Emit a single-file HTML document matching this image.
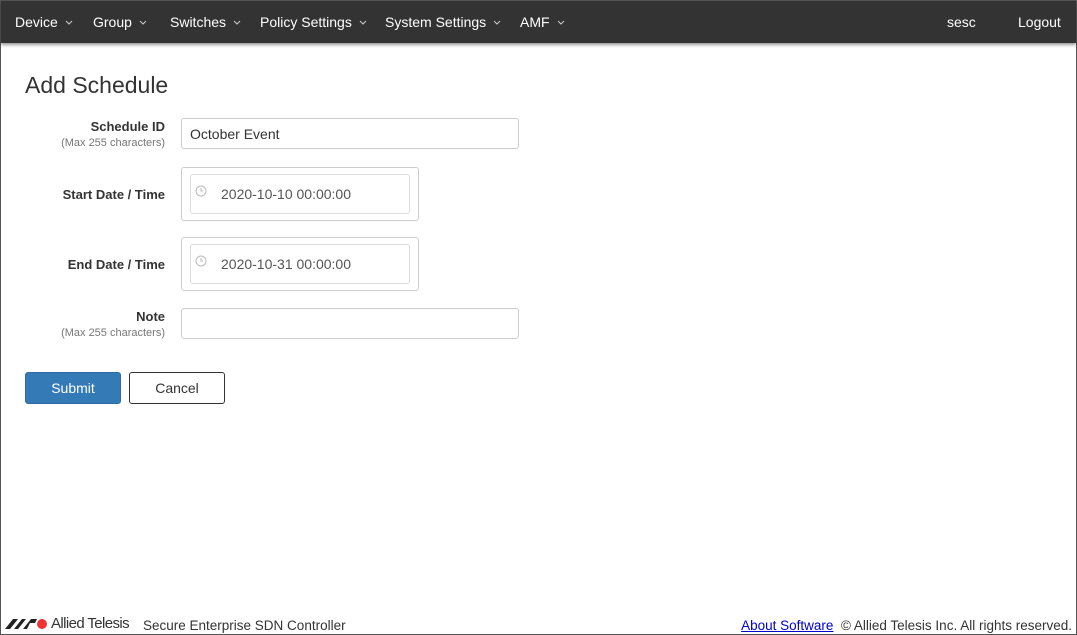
<!DOCTYPE html>
<html><head><style>
*{box-sizing:border-box}
body{margin:0;width:1077px;height:635px;overflow:hidden;font-family:"Liberation Sans",sans-serif;background:#fff;position:relative;border:1px solid #555}
.nav{position:absolute;left:0;top:0;width:1075px;height:42px;background:#333;box-shadow:0 2px 3px rgba(0,0,0,.4);color:#fff;font-size:14px}
.nav span{position:absolute;top:13px;white-space:nowrap}
.nav svg{margin-left:7px;vertical-align:2px}
h1{position:absolute;left:24px;top:71px;margin:0;font-weight:normal;font-size:23px;color:#333}
.lbl{position:absolute;right:911px;text-align:right;font-weight:bold;font-size:13px;color:#333;white-space:nowrap}
.lbl small{display:block;font-weight:normal;font-size:11px;color:#777;margin-top:3px}
.inp{position:absolute;left:180px;width:338px;height:31px;border:1px solid #ccc;border-radius:3px;font-size:14px;color:#333;padding:7px 8px}
.dt{position:absolute;left:180px;width:238px;height:54px;border:1px solid #ccc;border-radius:3px}
.dt div{position:absolute;left:8px;top:6px;width:220px;height:40px;border:1px solid #ddd;border-radius:3px;font-size:14px;color:#555;padding:11px 0 0 30px}
.dt svg{position:absolute;left:4px;top:10px}
.btn{position:absolute;top:371px;height:32px;border-radius:3px;font-size:14px;text-align:center;line-height:30px}
.foot{position:absolute;top:617px;font-size:13px;color:#333;white-space:nowrap}
</style></head><body>
<div class="nav">
<span style="left:14px">Device<svg width="8" height="5"><path d="M1 1l3 3 3-3" fill="none" stroke="#ccc"/></svg></span>
<span style="left:92px">Group<svg width="8" height="5"><path d="M1 1l3 3 3-3" fill="none" stroke="#ccc"/></svg></span>
<span style="left:169px">Switches<svg width="8" height="5"><path d="M1 1l3 3 3-3" fill="none" stroke="#ccc"/></svg></span>
<span style="left:259px">Policy Settings<svg width="8" height="5"><path d="M1 1l3 3 3-3" fill="none" stroke="#ccc"/></svg></span>
<span style="left:384px">System Settings<svg width="8" height="5"><path d="M1 1l3 3 3-3" fill="none" stroke="#ccc"/></svg></span>
<span style="left:519px">AMF<svg width="8" height="5"><path d="M1 1l3 3 3-3" fill="none" stroke="#ccc"/></svg></span>
<span style="left:946px">sesc</span>
<span style="left:1017px">Logout</span>
</div>
<h1>Add Schedule</h1>
<div class="lbl" style="top:118px">Schedule ID<small>(Max 255 characters)</small></div>
<div class="inp" style="top:117px">October Event</div>
<div class="lbl" style="top:186px">Start Date / Time</div>
<div class="dt" style="top:166px"><div><svg width="12" height="12" viewBox="0 0 12 12"><circle cx="6" cy="6" r="5" fill="none" stroke="#bbb"/><path d="M6 3v3h2" fill="none" stroke="#bbb"/></svg>2020-10-10 00:00:00</div></div>
<div class="lbl" style="top:256px">End Date / Time</div>
<div class="dt" style="top:236px"><div><svg width="12" height="12" viewBox="0 0 12 12"><circle cx="6" cy="6" r="5" fill="none" stroke="#bbb"/><path d="M6 3v3h2" fill="none" stroke="#bbb"/></svg>2020-10-31 00:00:00</div></div>
<div class="lbl" style="top:308px">Note<small>(Max 255 characters)</small></div>
<div class="inp" style="top:307px"></div>
<div class="btn" style="left:24px;width:96px;background:#337ab7;border:1px solid #2e6da4;color:#fff">Submit</div>
<div class="btn" style="left:128px;width:96px;border:1px solid #333;color:#333">Cancel</div>
<div class="foot" style="left:4px;top:614px"><svg width="44" height="14" viewBox="0 0 44 14" style="vertical-align:-2px"><path d="M0 13L8 3h5L5 13z M9 13L17 3h4l-8 10z M18 13l8-10h6l-2 4h-5l-3 6z" fill="#222"/><circle cx="37" cy="8" r="5" fill="#e33"/></svg><span style="font-size:15px;letter-spacing:-.6px;margin-left:2px">Allied Telesis</span></div>
<div class="foot" style="left:142px;font-size:13.5px">Secure Enterprise SDN Controller</div>
<div class="foot" style="right:4px;font-size:13.5px"><u style="color:#00c">About Software</u>&nbsp; © Allied Telesis Inc. All rights reserved.</div>
</body></html>
